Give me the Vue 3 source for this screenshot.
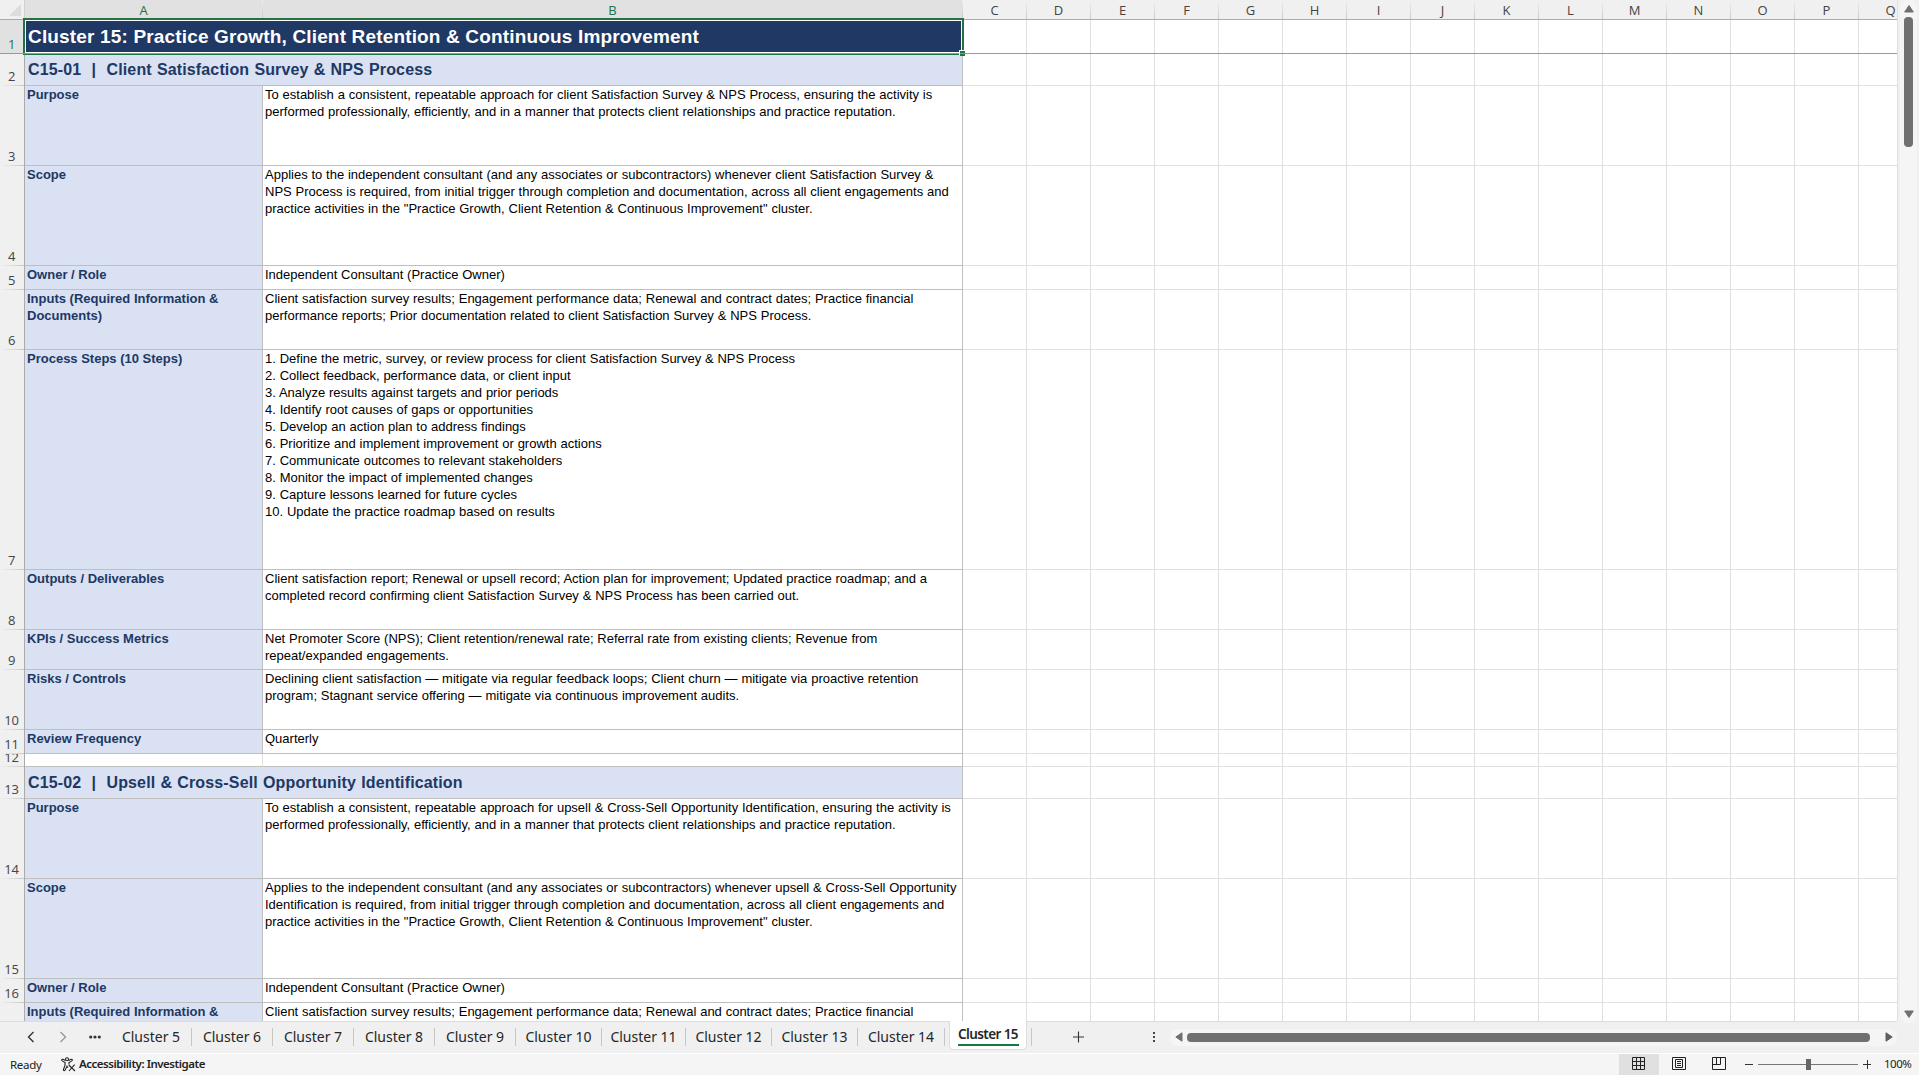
<template>
    <div class="excel">
        <div class="main">
            <div class="sheet">
                <div class="col-header">
                    <div class="corner"><span class="triangle"></span></div>
                    <div v-for="col in columns" :key="col" class="col" :class="colClass(col)">{{ col }}</div>
                </div>

                <div v-for="(row, index) in rows" :key="index" class="row" :class="row.type" :style="{ height: row.height + 'px' }">
                    <div class="row-num" :class="{ active: index === 0 }">
                        <span v-if="row.type !== 'last'">{{ index + 1 }}</span>
                    </div>
                    <template v-if="row.type === 'title' || row.type === 'section'">
                        <div class="merged"><span>{{ row.text }}</span></div>
                    </template>
                    <template v-else>
                        <div class="cell cell-a">
                            <p v-for="line in row.label" :key="line">{{ line }}</p>
                        </div>
                        <div class="cell cell-b">
                            <p v-for="line in row.lines" :key="line">{{ line }}</p>
                        </div>
                    </template>
                    <div v-for="n in 15" :key="n" class="blank"></div>
                </div>

                <div class="selection"></div>
                <div class="freeze-line"></div>
                <div class="fill-handle"></div>
            </div>

            <div class="vscroll">
                <svg width="10" height="8" viewBox="0 0 10 8"><path d="M5 0.5 L9.3 7 H0.7 Z" fill="#707070" stroke="#707070" stroke-linejoin="round" /></svg>
                <div class="vthumb"></div>
                <svg class="down" width="10" height="8" viewBox="0 0 10 8"><path d="M5 7.5 L9.3 1 H0.7 Z" fill="#707070" stroke="#707070" stroke-linejoin="round" /></svg>
            </div>
        </div>

        <div class="tabs-bar">
            <div class="tab-nav">
                <svg width="8" height="12" viewBox="0 0 8 12"><path d="M6.5 1 L1.5 6 L6.5 11" fill="none" stroke="#333" stroke-width="1.4" /></svg>
                <svg width="8" height="12" viewBox="0 0 8 12"><path d="M1.5 1 L6.5 6 L1.5 11" fill="none" stroke="#999" stroke-width="1.4" /></svg>
                <svg class="more" width="12" height="4" viewBox="0 0 12 4"><circle cx="1.7" cy="2" r="1.6" fill="#333" /><circle cx="6" cy="2" r="1.6" fill="#333" /><circle cx="10.3" cy="2" r="1.6" fill="#333" /></svg>
            </div>
            <div v-for="tab in tabs" :key="tab.name" class="tab" :class="{ current: tab.current }" :style="{ width: tab.width + 'px' }">
                <span>{{ tab.name }}</span>
            </div>
            <span class="separator"></span>
            <svg class="add" width="12" height="12" viewBox="0 0 12 12"><path d="M6.5 0.5 V11.5 M1 6 H12" stroke="#333" stroke-width="1.1" /></svg>
            <svg class="dots" width="4" height="12" viewBox="0 0 4 12"><path d="M1 1h2v2H1z M1 5h2v2H1z M1 9h2v2H1z" fill="#444" /></svg>
            <div class="hscroll">
                <svg width="8" height="10" viewBox="0 0 8 10"><path d="M0.8 5 L7 0.8 V9.2 Z" fill="#707070" stroke="#707070" stroke-linejoin="round" /></svg>
                <div class="hthumb"></div>
                <svg class="right" width="8" height="10" viewBox="0 0 8 10"><path d="M7.2 5 L1 0.8 V9.2 Z" fill="#606060" stroke="#606060" stroke-linejoin="round" /></svg>
            </div>
        </div>

        <div class="status">
            <span class="ready">Ready</span>
            <svg class="access" width="15" height="15" viewBox="0 0 15 15" fill="none" stroke="#222" stroke-width="1.1">
                <circle cx="6" cy="2.2" r="1.5" />
                <path d="M4.4 3.4 L2 2.3 Q0.6 2.2 0.7 3.3 Q0.9 4 4 5.4 V8.4 L2.4 12.6 Q2.6 14.2 3.9 13.4 L6 9.2 L7 10.6 M7.6 3.4 L10 2.3 Q11.5 2.2 11.3 3.3 Q11.1 4 8 5.4 V7.4" />
                <path d="M7.8 8 L14 14 M13.6 7.6 L8 14" />
            </svg>
            <span class="access-text">Accessibility: Investigate</span>
            <div class="views">
                <div class="view on">
                    <svg width="14" height="14" viewBox="0 0 14 14" fill="none" stroke="#222"><path d="M0.5 0.5h12v12h-12z M0.5 4.5h12 M0.5 8.5h12 M4.5 0.5v12 M8.5 0.5v12" /></svg>
                </div>
                <div class="view">
                    <svg width="14" height="14" viewBox="0 0 14 14" fill="none" stroke="#222"><path d="M0.5 0.5h13v12h-13z M3.5 2.5h7v8h-7z M5 4.5h4 M5 6.5h4 M5 8.5h4" /></svg>
                </div>
                <div class="view">
                    <svg width="14" height="14" viewBox="0 0 14 14" fill="none" stroke="#222"><path d="M0.5 0.5h13v12h-13z M0.5 7.5h8v-7 M4.5 0.5v7" /></svg>
                </div>
            </div>
            <div class="zoom">
                <span class="minus"></span>
                <div class="track"><span class="knob"></span></div>
                <svg width="8" height="9" viewBox="0 0 8 9"><path d="M4.5 0V9M0 4.5H8" stroke="#333" /></svg>
                <span class="percent">100%</span>
            </div>
        </div>
    </div>
</template>

<script setup>
const columns = 'ABCDEFGHIJKLMNOPQ'.split('')

function colClass(col) {
    return { 'col-a': col === 'A', 'col-b': col === 'B', active: col === 'A' || col === 'B' }
}

const rows = [
    { type: 'title', height: 34, text: 'Cluster 15: Practice Growth, Client Retention & Continuous Improvement' },
    { type: 'section', height: 32, text: 'C15-01  |  Client Satisfaction Survey & NPS Process' },
    {
        height: 80,
        label: ['Purpose'],
        lines: [
            'To establish a consistent, repeatable approach for client Satisfaction Survey & NPS Process, ensuring the activity is',
            'performed professionally, efficiently, and in a manner that protects client relationships and practice reputation.'
        ]
    },
    {
        height: 100,
        label: ['Scope'],
        lines: [
            'Applies to the independent consultant (and any associates or subcontractors) whenever client Satisfaction Survey &',
            'NPS Process is required, from initial trigger through completion and documentation, across all client engagements and',
            'practice activities in the "Practice Growth, Client Retention & Continuous Improvement" cluster.'
        ]
    },
    { height: 24, label: ['Owner / Role'], lines: ['Independent Consultant (Practice Owner)'] },
    {
        height: 60,
        label: ['Inputs (Required Information &', 'Documents)'],
        lines: [
            'Client satisfaction survey results; Engagement performance data; Renewal and contract dates; Practice financial',
            'performance reports; Prior documentation related to client Satisfaction Survey & NPS Process.'
        ]
    },
    {
        height: 220,
        label: ['Process Steps (10 Steps)'],
        lines: [
            '1. Define the metric, survey, or review process for client Satisfaction Survey & NPS Process',
            '2. Collect feedback, performance data, or client input',
            '3. Analyze results against targets and prior periods',
            '4. Identify root causes of gaps or opportunities',
            '5. Develop an action plan to address findings',
            '6. Prioritize and implement improvement or growth actions',
            '7. Communicate outcomes to relevant stakeholders',
            '8. Monitor the impact of implemented changes',
            '9. Capture lessons learned for future cycles',
            '10. Update the practice roadmap based on results'
        ]
    },
    {
        height: 60,
        label: ['Outputs / Deliverables'],
        lines: [
            'Client satisfaction report; Renewal or upsell record; Action plan for improvement; Updated practice roadmap; and a',
            'completed record confirming client Satisfaction Survey & NPS Process has been carried out.'
        ]
    },
    {
        height: 40,
        label: ['KPIs / Success Metrics'],
        lines: [
            'Net Promoter Score (NPS); Client retention/renewal rate; Referral rate from existing clients; Revenue from',
            'repeat/expanded engagements.'
        ]
    },
    {
        height: 60,
        label: ['Risks / Controls'],
        lines: [
            'Declining client satisfaction — mitigate via regular feedback loops; Client churn — mitigate via proactive retention',
            'program; Stagnant service offering — mitigate via continuous improvement audits.'
        ]
    },
    { height: 24, label: ['Review Frequency'], lines: ['Quarterly'] },
    { type: 'empty', height: 13, label: [], lines: [] },
    { type: 'section', height: 32, text: 'C15-02  |  Upsell & Cross-Sell Opportunity Identification' },
    {
        height: 80,
        label: ['Purpose'],
        lines: [
            'To establish a consistent, repeatable approach for upsell & Cross-Sell Opportunity Identification, ensuring the activity is',
            'performed professionally, efficiently, and in a manner that protects client relationships and practice reputation.'
        ]
    },
    {
        height: 100,
        label: ['Scope'],
        lines: [
            'Applies to the independent consultant (and any associates or subcontractors) whenever upsell & Cross-Sell Opportunity',
            'Identification is required, from initial trigger through completion and documentation, across all client engagements and',
            'practice activities in the "Practice Growth, Client Retention & Continuous Improvement" cluster.'
        ]
    },
    { height: 24, label: ['Owner / Role'], lines: ['Independent Consultant (Practice Owner)'] },
    // cut by the tab bar, its number is below the fold
    {
        type: 'last',
        height: 19,
        label: ['Inputs (Required Information &'],
        lines: ['Client satisfaction survey results; Engagement performance data; Renewal and contract dates; Practice financial']
    }
]

const tabs = [
    { name: 'Cluster 5', width: 81 },
    { name: 'Cluster 6', width: 81 },
    { name: 'Cluster 7', width: 81 },
    { name: 'Cluster 8', width: 81 },
    { name: 'Cluster 9', width: 81 },
    { name: 'Cluster 10', width: 86 },
    { name: 'Cluster 11', width: 84 },
    { name: 'Cluster 12', width: 86 },
    { name: 'Cluster 13', width: 86 },
    { name: 'Cluster 14', width: 87 },
    { name: 'Cluster 15', width: 78, current: true }
]
</script>

<style>
body {
    background: #f0f0f0;
    overflow: hidden;
}
</style>

<style scoped>
.excel {
    display: flex;
    flex-direction: column;
    width: 1919px;
    height: 1075px;
    overflow: hidden;
    background: #f0f0f0;
    font-family: 'Liberation Sans', Arial, sans-serif;
}

.main {
    display: flex;
    height: 1021px;
}

.sheet {
    position: relative;
    width: 1897px;
    overflow: hidden;
    background: #fff;
    border-right: 1px solid #e0e0e0;
}

.col-header {
    display: flex;
    height: 20px;
    width: 2000px;
}

.corner {
    display: flex;
    justify-content: flex-end;
    box-sizing: border-box;
    width: 25px;
    padding: 4px 3px 0 0;
    background: #f0f0f0;
    border-right: 1px solid #d0d0d0;
    border-bottom: 1px solid #ababab;
}

.triangle {
    width: 12px;
    height: 12px;
    background: #dcdcdc;
    clip-path: polygon(100% 0, 100% 100%, 0 100%);
}

.col {
    box-sizing: border-box;
    width: 64px;
    padding: 1px 1px 0 0;
    text-align: center;
    font: 13px/18px 'Open Sans', sans-serif;
    color: #444;
    background: linear-gradient(#f0f0f0, #c8c8c8) right / 1px 100% no-repeat #f0f0f0;
    border-bottom: 1px solid #ababab;
}

.col.active {
    color: #217346;
    background-color: #e1e1e1;
}

.col-a {
    width: 238px;
}

.col-b {
    width: 700px;
}

.row {
    display: flex;
    width: 2000px;
    overflow: hidden;
}

.row-num {
    display: flex;
    flex-direction: column;
    justify-content: flex-end;
    box-sizing: border-box;
    width: 25px;
    padding: 0 1px 3px 0;
    overflow: hidden;
    text-align: center;
    font: 13px/13px 'Open Sans', sans-serif;
    letter-spacing: -0.3px;
    color: #444;
    background: linear-gradient(90deg, #f0f0f0, #c8c8c8) bottom / 100% 1px no-repeat #f0f0f0;
    border-right: 1px solid #ababab;
}

.row-num.active {
    color: #217346;
    background-color: #e1e1e1;
}

.merged {
    display: flex;
    align-items: center;
    box-sizing: border-box;
    width: 938px;
    padding-left: 3px;
    font-weight: bold;
    font-kerning: none;
    white-space: pre;
    border-right: 1px solid #bfbfbf;
    border-bottom: 1px solid #bfbfbf;
}

.title .merged {
    background: #203864;
    color: #fff;
    font-size: 19px;
    letter-spacing: 0.16px;
}

.section .merged {
    background: #d9e1f2;
    color: #203864;
    font-size: 16px;
    letter-spacing: 0.14px;
    word-spacing: 0.55px;
}

.cell {
    box-sizing: border-box;
    padding-left: 2px;
    font-size: 13px;
    line-height: 17px;
    border-right: 1px solid #bfbfbf;
    border-bottom: 1px solid #bfbfbf;
}

.cell p {
    margin: 0;
    white-space: pre;
}

.cell-a {
    width: 238px;
    background: #d9e1f2;
    color: #203864;
    font-weight: bold;
}

.cell-b {
    width: 700px;
    color: #000;
    word-spacing: 0.2px;
}

.empty .cell {
    background: #fff;
    border-right-color: #e0e0e0;
}

.empty .cell-b {
    border-right-color: #bfbfbf;
}

.last .cell,
.last .blank {
    border-bottom: 0;
}

.last .row-num {
    background: #f0f0f0;
}

.blank {
    box-sizing: border-box;
    width: 64px;
    border-right: 1px solid #e0e0e0;
    border-bottom: 1px solid #e0e0e0;
}

.selection {
    position: absolute;
    left: 23px;
    top: 18px;
    box-sizing: border-box;
    width: 941px;
    height: 37px;
    border: 2px solid #217346;
    border-bottom-width: 1px;
    box-shadow: inset 0 0 0 1px #fff, inset 0 -2px 0 #fff;
}

.freeze-line {
    position: absolute;
    left: 0;
    top: 53px;
    width: 100%;
    height: 1px;
    background: #999;
}

.fill-handle {
    position: absolute;
    left: 960px;
    top: 51px;
    width: 5px;
    height: 5px;
    background: linear-gradient(#217346 2px, #8a9a90 2px, #8a9a90 3px, #217346 3px);
    box-shadow: -1px -1px 0 #fff;
}

.vscroll {
    display: flex;
    flex-direction: column;
    align-items: center;
    width: 17px;
    height: 1023px;
    margin-left: 2px;
    padding: 5px 0 5px;
    box-sizing: border-box;
    border-radius: 8px;
    background: #f5f5f5;
}

.vthumb {
    width: 9px;
    height: 130px;
    margin-top: 4px;
    border-radius: 4px;
    background: #707070;
}

.down {
    margin-top: auto;
}

.tabs-bar {
    display: flex;
    align-items: center;
    box-sizing: border-box;
    height: 32px;
    font: 14px/20px 'Noto Sans', sans-serif;
    color: #262626;
    background: linear-gradient(#dcdcdc, #dcdcdc) left top / 1897px 1px no-repeat;
}

.tab-nav {
    display: flex;
    align-items: center;
    gap: 24px;
    width: 84px;
    padding-left: 27px;
}

.more {
    margin-left: -2px;
}

.tab {
    box-sizing: border-box;
    height: 18px;
    border-right: 1px solid #c6c6c6;
    text-align: center;
    line-height: 17px;
    white-space: nowrap;
}

.tab.current {
    align-self: flex-start;
    height: 29px;
    margin: 0 4px;
    padding-top: 4px;
    background: #fff;
    border: 1px solid #dcdcdc;
    border-top: 0;
    border-radius: 0 0 5px 5px;
    font-size: 13.5px;
    font-weight: 600;
    letter-spacing: -0.6px;
}

.tab.current span {
    display: block;
    width: 61px;
    height: 19px;
    margin: 0 auto;
    line-height: 19px;
    border-bottom: 2px solid #107c41;
}

.separator {
    width: 1px;
    height: 18px;
    background: #c6c6c6;
}

.add {
    margin-left: 40px;
}

.dots {
    margin-left: 68px;
}

.hscroll {
    display: flex;
    align-items: center;
    box-sizing: border-box;
    width: 727px;
    height: 17px;
    margin: 0 22px 0 auto;
    padding: 0 4px 0 5px;
    border-radius: 8px;
    background: #f5f5f5;
}

.hthumb {
    width: 683px;
    height: 9px;
    margin-left: 4px;
    border-radius: 4px;
    background: #707070;
}

.right {
    margin-left: auto;
}

.status {
    display: flex;
    align-items: center;
    box-sizing: border-box;
    height: 22px;
    padding-bottom: 1px;
    border-top: 1px solid #fff;
    background: #f5f5f5;
    font: 11.5px/20px 'Noto Sans', sans-serif;
    color: #222;
}

.ready {
    width: 31px;
    margin-left: 10px;
    padding-top: 1px;
    letter-spacing: -0.3px;
}

.access {
    margin-left: 20px;
}

.access-text {
    margin-left: 3px;
    font-weight: 600;
    letter-spacing: -0.47px;
}

.views {
    display: flex;
    margin-left: auto;
}

.view {
    display: flex;
    align-items: center;
    justify-content: center;
    width: 40px;
    height: 21px;
}

.view.on {
    background: #e0e0e0;
}

.zoom {
    display: flex;
    align-items: center;
    margin-left: 6px;
}

.minus {
    width: 8px;
    height: 1px;
    background: #333;
}

.track {
    width: 100px;
    height: 1px;
    margin: 0 5px;
    background: #777;
}

.knob {
    display: block;
    width: 5px;
    height: 11px;
    margin: -5px auto 0;
    background: #666;
}

.percent {
    width: 27px;
    margin: 0 8px 0 13px;
    letter-spacing: -0.5px;
}
</style>
